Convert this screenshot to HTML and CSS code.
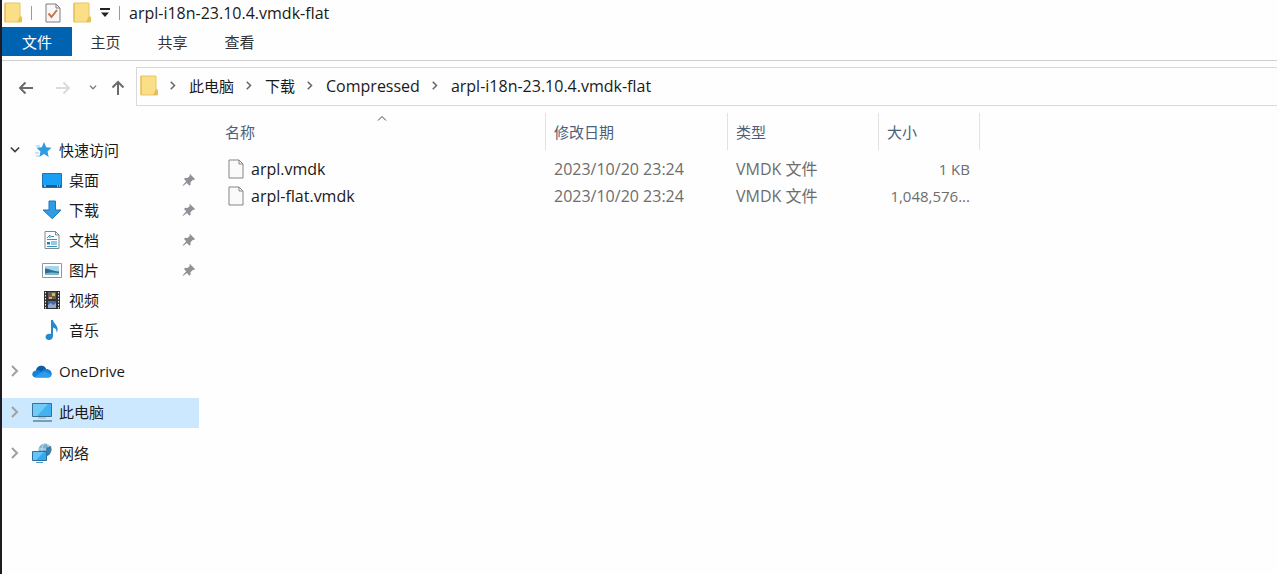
FILE: index.html
```html
<!DOCTYPE html>
<html lang="zh-CN">

<head>
  <meta charset="utf-8">
  <title>arpl-i18n-23.10.4.vmdk-flat</title>
  <link rel="stylesheet" href="styles.css">
</head>

<body>
  <!-- shapes used more than once -->
  <svg class="sprites" aria-hidden="true">
    <symbol id="folder" viewBox="0 0 18 21">
      <path d="M1 1h15v13l1.500 1v5H1z" fill="#fbdf86" stroke="#e8c566"/>
      <path d="M13 20l3-6 1.500 1v5z" fill="#e9bf55"/>
      <path d="M1 1v19" stroke="#e2b84c"/>
    </symbol>
    <symbol id="right" viewBox="0 0 10 12">
      <path d="M2 1l5 5-5 5" fill="none" stroke="currentColor" stroke-width="2"/>
    </symbol>
    <symbol id="down" viewBox="0 0 12 8">
      <path d="M1 1l5 5 5-5" fill="none" stroke="currentColor" stroke-width="2"/>
    </symbol>
    <symbol id="pin" viewBox="0 0 14 14">
      <path d="M8 1l5 5-1 1-1-.3-2.500 2.500.2 2.300-1.200 1.200-2.600-2.700L1 13l-.4-.4L4.200 8.200 2 6l1.200-1.200 2.300.2L8 2.800 7.300 1.700z" fill="#8e9296"/>
    </symbol>
    <symbol id="file" viewBox="0 0 16 20">
      <path d="M1 1h10l4 4v14H1z" fill="#fafafa" stroke="#858585"/>
      <path d="M11 1v4h4" fill="none" stroke="#858585"/>
    </symbol>
  </svg>

  <header class="titlebar">
    <svg class="folder"><use href="#folder"/></svg>
    <span class="divider"></span>
    <button class="quick check" aria-label="属性">
      <svg width="16" height="20" viewBox="0 0 16 20">
        <path d="M1 1h10l4 4v14H1z" fill="#f8f8f8" stroke="#7d7d7d"/>
        <path d="M11 1v4h4" fill="none" stroke="#7d7d7d"/>
        <path d="M3.500 10.500l3 3.500 5.500-7" fill="none" stroke="#d0704a" stroke-width="2"/>
      </svg>
    </button>
    <button class="quick" aria-label="新建文件夹"><svg class="folder"><use href="#folder"/></svg></button>
    <button class="quick more" aria-label="自定义">
      <svg width="10" height="9" viewBox="0 0 10 9">
        <path d="M0 0h10v2H0zM1 4.500h8L5 9z" fill="#222"/>
      </svg>
    </button>
    <span class="divider"></span>
    <span class="title">arpl-i18n-23.10.4.vmdk-flat</span>
  </header>

  <div class="tabs">
    <button class="tab active">文件</button>
    <button class="tab">主页</button>
    <button class="tab">共享</button>
    <button class="tab">查看</button>
  </div>

  <div class="toolbar">
    <div class="arrows">
      <button aria-label="后退">
        <svg width="16" height="14" viewBox="0 0 16 14"><path d="M15 7H2M7.500 1.500L2 7l5.500 5.500" fill="none" stroke="#6b6b6b" stroke-width="2"/></svg>
      </button>
      <button aria-label="前进">
        <svg width="16" height="14" viewBox="0 0 16 14"><path d="M1 7h13M8.500 1.500L14 7l-5.500 5.500" fill="none" stroke="#dcdcdc" stroke-width="2"/></svg>
      </button>
      <button class="recent" aria-label="最近位置"><svg width="8" height="5"><use href="#down"/></svg></button>
      <button aria-label="上移">
        <svg width="14" height="16" viewBox="0 0 14 16"><path d="M7 15V2M1.500 7.500L7 2l5.500 5.500" fill="none" stroke="#6b6b6b" stroke-width="2"/></svg>
      </button>
    </div>
    <div class="address">
      <svg class="folder"><use href="#folder"/></svg>
      <svg class="sep"><use href="#right"/></svg>
      <button>此电脑</button>
      <svg class="sep"><use href="#right"/></svg>
      <button>下载</button>
      <svg class="sep"><use href="#right"/></svg>
      <button class="latin">Compressed</button>
      <svg class="sep"><use href="#right"/></svg>
      <button class="latin">arpl-i18n-23.10.4.vmdk-flat</button>
    </div>
  </div>

  <div class="content">
    <nav class="tree">
      <div class="group">
        <a href="#" class="item">
          <svg class="toggle open"><use href="#down"/></svg>
          <svg class="icon" viewBox="0 0 20 18"><path d="M12 1l2.300 5.300 5.200.4-4 3.700 1.200 5.600-4.700-3-4.700 3 1.200-5.500-4-3.800 5.300-.4z" fill="#2f9be0"/><path d="M4 5h4M3 12h4M4 15h3" stroke="#8cc7ee"/></svg>
          <span>快速访问</span>
        </a>
        <a href="#" class="item sub">
          <svg class="icon" viewBox="0 0 20 18"><path d="M.5 2.500h19v14H.5z" fill="#18a0f5" stroke="#2272b4"/><path d="M1 15h18" stroke="#145a92" stroke-width="2"/><path d="M2 15h2M15 15h1M17 15h1" stroke="#fff"/></svg>
          <span>桌面</span>
          <svg class="pin"><use href="#pin"/></svg>
        </a>
        <a href="#" class="item sub">
          <svg class="icon" viewBox="0 0 20 18"><path d="M7 0h6.500v9H19l-8.700 8.700L1 9h6z" fill="#2e9be6" stroke="#2377b8"/></svg>
          <span>下载</span>
          <svg class="pin"><use href="#pin"/></svg>
        </a>
        <a href="#" class="item sub">
          <svg class="icon" viewBox="0 0 20 18"><path d="M3 .5h10.500l3.500 3.500v13.500H3z" fill="#fbfdfe" stroke="#7c8a93"/><path d="M13.500.5V4H17" fill="none" stroke="#7c8a93"/><path d="M5 7l3-3v3M9 5.500h3M5 8.500h10M9 11h6M9 13h6M5 15.500h10" fill="none" stroke="#3a93bd"/><path d="M5 11h3v2.500H5z" fill="#297da9"/></svg>
          <span>文档</span>
          <svg class="pin"><use href="#pin"/></svg>
        </a>
        <a href="#" class="item sub">
          <svg class="icon" viewBox="0 0 20 18"><path d="M.5 2.500h19v14H.5z" fill="#fff" stroke="#8b98a2"/><path d="M3 5h14v9H3z" fill="#a6d6ef"/><path d="M3 7.500c4 0 6 2.500 14 3V14H3z" fill="#2d6e91"/><path d="M3 12.500c5-1.500 9-1 14-.5v2H3z" fill="#7eb5ce"/></svg>
          <span>图片</span>
          <svg class="pin"><use href="#pin"/></svg>
        </a>
        <a href="#" class="item sub">
          <svg class="icon" viewBox="0 0 20 18"><path d="M2 0h16v18H2z" fill="#303030"/><path d="M3.500 1v17M16.500 1v17" stroke="#eee" stroke-dasharray="1.500 1.500"/><path d="M6 1h8v7H6z" fill="#675d52"/><path d="M6 10h8v7H6z" fill="#4268a5"/><path d="M10 2h3v3h-3zM7 6h3v2H7z" fill="#e0b34c"/><path d="M6 14l3-2 2 2 3-2v5H6z" fill="#8fa9d2"/></svg>
          <span>视频</span>
        </a>
        <a href="#" class="item sub">
          <svg class="icon" viewBox="0 0 20 20"><path d="M9 0h2c.5 4 5.500 5 4.500 11l-1 1.500C15 9 13 8 11 7.500V16c0 5-7.500 5-7.500 1 0-3 3.500-4 5.500-3z" fill="#2489cf"/></svg>
          <span>音乐</span>
        </a>
      </div>
      <a href="#" class="item">
        <svg class="toggle"><use href="#right"/></svg>
        <svg class="icon" viewBox="0 0 20 18"><path d="M4 15.500C-1 15.500-1 9 4 8.500 5 3 12 2 14 7c7 0 7.500 8.500 2 8.500z" fill="#1683d9"/><path d="M4 8.500C5 3 12 2 14 7c-3 0-4 2-5 3-1-1.500-3-2-5-1.500z" fill="#0d5bab"/><path d="M3 15c3-3 8-6 11-5 2 1 4 2 5 3-.5 2-1.500 2.500-3 2.500H4z" fill="#2a9df0"/></svg>
        <span>OneDrive</span>
      </a>
      <a href="#" class="item selected">
        <svg class="toggle"><use href="#right"/></svg>
        <svg class="icon" viewBox="0 0 20 20"><path d="M.5 1.500h19v13H.5z" fill="#43b2ef" stroke="#3a6e92"/><path d="M1 2h15L5 14H1z" fill="#72caf7"/><path d="M6 16h8" stroke="#8fadc0"/><path d="M1 19h19" stroke="#61849a" stroke-width="1.500"/></svg>
        <span>此电脑</span>
      </a>
      <a href="#" class="item">
        <svg class="toggle"><use href="#right"/></svg>
        <svg class="icon" viewBox="0 0 20 20"><circle cx="13" cy="7" r="6.500" fill="#7bafca"/><path d="M12 1c-3 3-3 9 0 12M7 6h12M15 1c3 3 3 8 0 12" fill="none" stroke="#c9e2ee"/><path d="M14 5l5-2c1 4 0 8-4 10z" fill="#397fa8"/><path d="M.5 8.500h14v9H.5z" fill="#35a9ed" stroke="#286f9f"/><path d="M1 9h11l-8 8H1z" fill="#68c4f4"/><path d="M4 19.500h7" stroke="#4e9cc8"/></svg>
        <span>网络</span>
      </a>
    </nav>

    <main>
      <table class="files">
        <thead>
          <tr>
            <th class="name">名称<svg class="sort" viewBox="0 0 10 6"><path d="M1 5.500l4-4 4 4" fill="none" stroke="#444"/></svg></th>
            <th class="date">修改日期</th>
            <th class="type">类型</th>
            <th class="size">大小</th>
          </tr>
        </thead>
        <tbody>
          <tr>
            <td><div class="filename"><svg class="file"><use href="#file"/></svg>arpl.vmdk</div></td>
            <td>2023/10/20 23:24</td>
            <td>VMDK 文件</td>
            <td class="number">1 KB</td>
          </tr>
          <tr>
            <td><div class="filename"><svg class="file"><use href="#file"/></svg>arpl-flat.vmdk</div></td>
            <td>2023/10/20 23:24</td>
            <td>VMDK 文件</td>
            <td class="number">1,048,576...</td>
          </tr>
        </tbody>
      </table>
    </main>
  </div>
</body>

</html>
```

FILE: styles.css
```css
* {
  box-sizing: border-box;
}

body {
  margin: 0;
  min-height: 100vh;
  border-left: 2px solid #1f1b20;
  background: #fefefe;
  color: #1a1a1a;
  font: 15px/20px "Open Sans", "Noto Sans CJK SC", sans-serif;
}

button {
  padding: 0;
  border: 0;
  background: none;
  color: inherit;
  font: inherit;
}

svg {
  display: block;
  flex: none;
}

.sprites {
  position: absolute;
  width: 0;
  height: 0;
}

.folder {
  width: 18px;
  height: 21px;
}

/* title bar */
.titlebar {
  display: flex;
  align-items: center;
  height: 27px;
  padding: 0 0 2px 2px;
}

.title,
.latin {
  font-size: 16px;
}

.divider {
  width: 1px;
  height: 14px;
  margin: 0 9px;
  background: #999;
}

.check {
  margin: 0 12px 0 4px;
}

.more {
  margin-left: 9px;
}

/* ribbon tabs */
.tabs {
  display: flex;
  height: 34px;
  padding-bottom: 4px;
  border-bottom: 1px solid #d0d0d0;
}

.tab {
  width: 67px;
  color: #333;
}

.tab.active {
  width: 70px;
  background: #0063b1;
  color: #fff;
}

/* navigation buttons and address */
.toolbar {
  display: flex;
  padding: 6px 0 7px;
}

.arrows {
  display: flex;
  align-items: center;
  gap: 21px;
  width: 134px;
  padding: 2px 0 0 16px;
}

.arrows .recent {
  margin: 0 -7px 0 -3px;
  color: #777;
}

.address {
  display: flex;
  flex: 1;
  align-items: center;
  height: 39px;
  padding: 0 0 2px 3px;
  border: 1px solid #d9d9d9;
  border-right: 0;
}

.sep {
  width: 8px;
  height: 9px;
  margin: 0 12px 0 11px;
  color: #666;
}

/* folder tree */
.content {
  display: flex;
}

.tree {
  display: flex;
  flex-direction: column;
  gap: 11px;
  width: 197px;
  padding-top: 23px;
}

.item {
  display: flex;
  align-items: center;
  height: 30px;
  padding: 0 3px 2px 8px;
  color: #1a1a1a;
  text-decoration: none;
}

.item.sub {
  padding-left: 40px;
}

.item.selected {
  background: #cce8ff;
}

.toggle {
  width: 10px;
  height: 12px;
  margin-right: 12px;
  color: #a0a0a0;
}

.toggle.open {
  color: #404040;
}

.icon {
  width: 20px;
  height: 20px;
  margin-right: 7px;
}

.pin {
  width: 14px;
  height: 14px;
  margin-left: auto;
}

/* file list */
main {
  flex: 1;
  padding-left: 18px;
}

.files {
  border-spacing: 0;
  table-layout: fixed;
  width: 763px;
  color: #6d6d6d;
}

.files th {
  position: relative;
  height: 37px;
  padding: 0 8px;
  border-right: 1px solid #e2e2e2;
  color: #4c607a;
  font-weight: normal;
  text-align: left;
}

.files tbody::before {
  content: "";
  display: block;
  height: 6px;
}

.files td {
  height: 27px;
  padding: 0 8px 1px;
  font-size: 16px;
}

.files .number {
  padding: 0 10px 1px 0;
  font-size: 15px;
  text-align: right;
}

.name {
  width: 329px;
}

.date {
  width: 182px;
}

.type {
  width: 151px;
}

.size {
  width: 101px;
}

.sort {
  position: absolute;
  top: 2px;
  left: 50%;
  width: 10px;
  height: 6px;
  margin-left: -4px;
}

.filename {
  display: flex;
  align-items: center;
  gap: 7px;
  padding-left: 3px;
  color: #1a1a1a;
}

.file {
  width: 16px;
  height: 20px;
}
```
